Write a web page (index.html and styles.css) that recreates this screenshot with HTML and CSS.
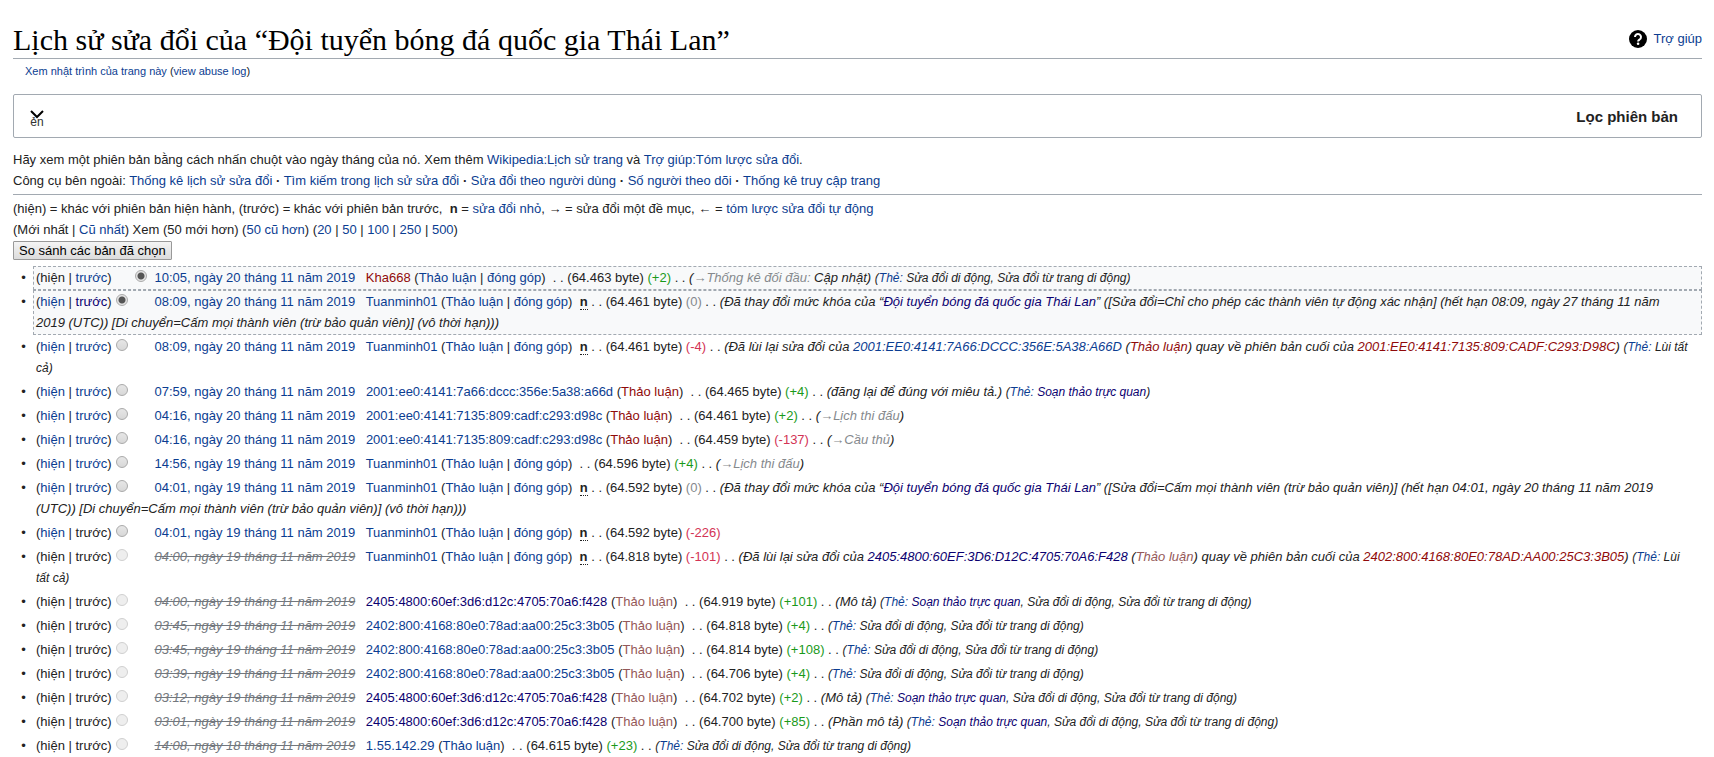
FILE: index.html
```html
<!DOCTYPE html>
<html lang="vi">
<head>
    <meta charset="UTF-8">
    <meta name="viewport" content="width=device-width, initial-scale=1.0">
    <title>Lịch sử sửa đổi của “Đội tuyển bóng đá quốc gia Thái Lan”</title>
    <link rel="stylesheet" href="styles.css">
</head>
<body>
    <header class="heading">
        <h1>Lịch sử sửa đổi của “Đội tuyển bóng đá quốc gia Thái Lan”</h1>
        <a class="help" href="#">
            <svg width="20" height="20" viewBox="0 0 20 20" aria-hidden="true"><circle cx="10" cy="10" r="9" fill="#000"/><path d="M7 8a3 3 0 1 1 4.6 2.5c-1 .7-1.5 1-1.5 2" fill="none" stroke="#fff" stroke-width="2"/><circle cx="10.100" cy="14.700" r="1.300" fill="#fff"/></svg>
            Trợ giúp
        </a>
    </header>
    <div class="subtitle"><a href="#">Xem nhật trình của trang này</a> (<a href="#">view abuse log</a>)</div>

    <!-- Bộ lọc -->
    <div class="filter">
        <button class="toggle" type="button" aria-label="Mở rộng">
            <svg width="14" height="9" viewBox="0 0 14 9" aria-hidden="true"><path d="M1 1l6 6 6-6" fill="none" stroke="#000" stroke-width="2"/></svg>
            <span>ẻn</span>
        </button>
        <strong>Lọc phiên bản</strong>
    </div>

    <div class="intro">
        <p>Hãy xem một phiên bản bằng cách nhấn chuột vào ngày tháng của nó. Xem thêm <a href="#">Wikipedia:Lịch sử trang</a> và <a href="#">Trợ giúp:Tóm lược sửa đổi</a>.</p>
        <p>Công cụ bên ngoài: <a href="#">Thống kê lịch sử sửa đổi</a> <b>·</b> <a href="#">Tìm kiếm trong lịch sử sửa đổi</a> <b>·</b> <a href="#">Sửa đổi theo người dùng</a> <b>·</b> <a href="#">Số người theo dõi</a> <b>·</b> <a href="#">Thống kê truy cập trang</a></p>
    </div>
    <div class="legend">
        <p>(hiện) = khác với phiên bản hiện hành, (trước) = khác với phiên bản trước, &nbsp;<b>n</b> = <a href="#">sửa đổi nhỏ</a>, → = sửa đổi một đề mục, ← = <a href="#">tóm lược sửa đổi tự động</a></p>
        <p>(Mới nhất | <a href="#">Cũ nhất</a>) Xem (50 mới hơn) (<a href="#">50 cũ hơn</a>) (<a href="#">20</a> | <a href="#">50</a> | <a href="#">100</a> | <a href="#">250</a> | <a href="#">500</a>)</p>
    </div>

    <!-- Danh sách phiên bản -->
    <form>
        <button class="compare" type="button">So sánh các bản đã chọn</button>
        <ul class="history">
            <li class="selected">(hiện | <a href="#">trước</a>)<span class="pick second"><input type="radio" name="diff" aria-label="10:05, ngày 20 tháng 11 năm 2019" checked></span><a class="date" href="#">10:05, ngày 20 tháng 11 năm 2019</a> <a class="new" href="#">Kha668</a> (<a href="#">Thảo luận</a> | <a href="#">đóng góp</a>)&nbsp; . . (64.463 byte) <span class="plus">(+2)</span> . . <i>(<span class="auto">→Thống kê đối đầu:</span> Cập nhật)</i> <i class="tags">(<a href="#">Thẻ:</a> Sửa đổi di động, Sửa đổi từ trang di động)</i></li>
            <li class="selected">(<a href="#">hiện</a> | <a class="visited" href="#">trước</a>)<span class="pick"><input type="radio" name="oldid" aria-label="08:09, ngày 20 tháng 11 năm 2019" checked></span><a class="date" href="#">08:09, ngày 20 tháng 11 năm 2019</a> <a href="#">Tuanminh01</a> (<a href="#">Thảo luận</a> | <a href="#">đóng góp</a>)&nbsp; <abbr>n</abbr> . . (64.461 byte) <span class="zero">(0)</span> . . <i>(Đã thay đổi mức khóa của “<a class="visited" href="#">Đội tuyển bóng đá quốc gia Thái Lan</a>” ([Sửa đổi=Chỉ cho phép các thành viên tự động xác nhận] (hết hạn 08:09, ngày 27 tháng 11 năm 2019 (UTC)) [Di chuyển=Cấm mọi thành viên (trừ bảo quản viên)] (vô thời hạn)))</i></li>
            <li>(<a href="#">hiện</a> | <a href="#">trước</a>)<span class="pick"><input type="radio" name="oldid" aria-label="08:09, ngày 20 tháng 11 năm 2019"></span><a class="date" href="#">08:09, ngày 20 tháng 11 năm 2019</a> <a href="#">Tuanminh01</a> (<a href="#">Thảo luận</a> | <a href="#">đóng góp</a>)&nbsp; <abbr>n</abbr> . . (64.461 byte) <span class="minus">(-4)</span> . . <i>(Đã lùi lại sửa đổi của <a href="#">2001:EE0:4141:7A66:DCCC:356E:5A38:A66D</a> (<a class="new" href="#">Thảo luận</a>) quay về phiên bản cuối của <a class="new" href="#">2001:EE0:4141:7135:809:CADF:C293:D98C</a>)</i> <i class="tags">(<a href="#">Thẻ:</a> Lùi tất cả)</i></li>
            <li>(<a href="#">hiện</a> | <a href="#">trước</a>)<span class="pick"><input type="radio" name="oldid" aria-label="07:59, ngày 20 tháng 11 năm 2019"></span><a class="date" href="#">07:59, ngày 20 tháng 11 năm 2019</a> <a href="#">2001:ee0:4141:7a66:dccc:356e:5a38:a66d</a> (<a class="new" href="#">Thảo luận</a>)&nbsp; . . (64.465 byte) <span class="plus">(+4)</span> . . <i>(đăng lại để đúng với miêu tả.)</i> <i class="tags">(<a href="#">Thẻ:</a> <a class="visited" href="#">Soạn thảo trực quan</a>)</i></li>
            <li>(<a href="#">hiện</a> | <a href="#">trước</a>)<span class="pick"><input type="radio" name="oldid" aria-label="04:16, ngày 20 tháng 11 năm 2019"></span><a class="date" href="#">04:16, ngày 20 tháng 11 năm 2019</a> <a href="#">2001:ee0:4141:7135:809:cadf:c293:d98c</a> (<a class="new" href="#">Thảo luận</a>)&nbsp; . . (64.461 byte) <span class="plus">(+2)</span> . . <i>(<span class="auto">→Lịch thi đấu</span>)</i></li>
            <li>(<a href="#">hiện</a> | <a href="#">trước</a>)<span class="pick"><input type="radio" name="oldid" aria-label="04:16, ngày 20 tháng 11 năm 2019"></span><a class="date" href="#">04:16, ngày 20 tháng 11 năm 2019</a> <a href="#">2001:ee0:4141:7135:809:cadf:c293:d98c</a> (<a class="new" href="#">Thảo luận</a>)&nbsp; . . (64.459 byte) <span class="minus">(-137)</span> . . <i>(<span class="auto">→Cầu thủ</span>)</i></li>
            <li>(<a href="#">hiện</a> | <a href="#">trước</a>)<span class="pick"><input type="radio" name="oldid" aria-label="14:56, ngày 19 tháng 11 năm 2019"></span><a class="date" href="#">14:56, ngày 19 tháng 11 năm 2019</a> <a href="#">Tuanminh01</a> (<a href="#">Thảo luận</a> | <a href="#">đóng góp</a>)&nbsp; . . (64.596 byte) <span class="plus">(+4)</span> . . <i>(<span class="auto">→Lịch thi đấu</span>)</i></li>
            <li>(<a href="#">hiện</a> | <a href="#">trước</a>)<span class="pick"><input type="radio" name="oldid" aria-label="04:01, ngày 19 tháng 11 năm 2019"></span><a class="date" href="#">04:01, ngày 19 tháng 11 năm 2019</a> <a href="#">Tuanminh01</a> (<a href="#">Thảo luận</a> | <a href="#">đóng góp</a>)&nbsp; <abbr>n</abbr> . . (64.592 byte) <span class="zero">(0)</span> . . <i>(Đã thay đổi mức khóa của “<a class="visited" href="#">Đội tuyển bóng đá quốc gia Thái Lan</a>” ([Sửa đổi=Cấm mọi thành viên (trừ bảo quản viên)] (hết hạn 04:01, ngày 20 tháng 11 năm 2019 (UTC)) [Di chuyển=Cấm mọi thành viên (trừ bảo quản viên)] (vô thời hạn)))</i></li>
            <li>(<a href="#">hiện</a> | trước)<span class="pick"><input type="radio" name="oldid" aria-label="04:01, ngày 19 tháng 11 năm 2019"></span><a class="date" href="#">04:01, ngày 19 tháng 11 năm 2019</a> <a href="#">Tuanminh01</a> (<a href="#">Thảo luận</a> | <a href="#">đóng góp</a>)&nbsp; <abbr>n</abbr> . . (64.592 byte) <span class="minus">(-226)</span></li>
            <li>(hiện | trước)<span class="pick"><input type="radio" name="oldid" aria-label="04:00, ngày 19 tháng 11 năm 2019" disabled></span><span class="date deleted">04:00, ngày 19 tháng 11 năm 2019</span> <a href="#">Tuanminh01</a> (<a href="#">Thảo luận</a> | <a href="#">đóng góp</a>)&nbsp; <abbr>n</abbr> . . (64.818 byte) <span class="minus">(-101)</span> . . <i>(Đã lùi lại sửa đổi của <a class="visited" href="#">2405:4800:60EF:3D6:D12C:4705:70A6:F428</a> (<a class="new-visited" href="#">Thảo luận</a>) quay về phiên bản cuối của <a class="new" href="#">2402:800:4168:80E0:78AD:AA00:25C3:3B05</a>)</i> <i class="tags">(<a href="#">Thẻ:</a> Lùi tất cả)</i></li>
            <li>(hiện | trước)<span class="pick"><input type="radio" name="oldid" aria-label="04:00, ngày 19 tháng 11 năm 2019" disabled></span><span class="date deleted">04:00, ngày 19 tháng 11 năm 2019</span> <a class="visited" href="#">2405:4800:60ef:3d6:d12c:4705:70a6:f428</a> (<a class="new-visited" href="#">Thảo luận</a>)&nbsp; . . (64.919 byte) <span class="plus">(+101)</span> . . <i>(Mô tả)</i> <i class="tags">(<a href="#">Thẻ:</a> <a class="visited" href="#">Soạn thảo trực quan</a>, Sửa đổi di động, Sửa đổi từ trang di động)</i></li>
            <li>(hiện | trước)<span class="pick"><input type="radio" name="oldid" aria-label="03:45, ngày 19 tháng 11 năm 2019" disabled></span><span class="date deleted">03:45, ngày 19 tháng 11 năm 2019</span> <a href="#">2402:800:4168:80e0:78ad:aa00:25c3:3b05</a> (<a class="new-visited" href="#">Thảo luận</a>)&nbsp; . . (64.818 byte) <span class="plus">(+4)</span> . . <i class="tags">(<a href="#">Thẻ:</a> Sửa đổi di động, Sửa đổi từ trang di động)</i></li>
            <li>(hiện | trước)<span class="pick"><input type="radio" name="oldid" aria-label="03:45, ngày 19 tháng 11 năm 2019" disabled></span><span class="date deleted">03:45, ngày 19 tháng 11 năm 2019</span> <a href="#">2402:800:4168:80e0:78ad:aa00:25c3:3b05</a> (<a class="new-visited" href="#">Thảo luận</a>)&nbsp; . . (64.814 byte) <span class="plus">(+108)</span> . . <i class="tags">(<a href="#">Thẻ:</a> Sửa đổi di động, Sửa đổi từ trang di động)</i></li>
            <li>(hiện | trước)<span class="pick"><input type="radio" name="oldid" aria-label="03:39, ngày 19 tháng 11 năm 2019" disabled></span><span class="date deleted">03:39, ngày 19 tháng 11 năm 2019</span> <a href="#">2402:800:4168:80e0:78ad:aa00:25c3:3b05</a> (<a class="new-visited" href="#">Thảo luận</a>)&nbsp; . . (64.706 byte) <span class="plus">(+4)</span> . . <i class="tags">(<a href="#">Thẻ:</a> Sửa đổi di động, Sửa đổi từ trang di động)</i></li>
            <li>(hiện | trước)<span class="pick"><input type="radio" name="oldid" aria-label="03:12, ngày 19 tháng 11 năm 2019" disabled></span><span class="date deleted">03:12, ngày 19 tháng 11 năm 2019</span> <a class="visited" href="#">2405:4800:60ef:3d6:d12c:4705:70a6:f428</a> (<a class="new-visited" href="#">Thảo luận</a>)&nbsp; . . (64.702 byte) <span class="plus">(+2)</span> . . <i>(Mô tả)</i> <i class="tags">(<a href="#">Thẻ:</a> <a class="visited" href="#">Soạn thảo trực quan</a>, Sửa đổi di động, Sửa đổi từ trang di động)</i></li>
            <li>(hiện | trước)<span class="pick"><input type="radio" name="oldid" aria-label="03:01, ngày 19 tháng 11 năm 2019" disabled></span><span class="date deleted">03:01, ngày 19 tháng 11 năm 2019</span> <a class="visited" href="#">2405:4800:60ef:3d6:d12c:4705:70a6:f428</a> (<a class="new-visited" href="#">Thảo luận</a>)&nbsp; . . (64.700 byte) <span class="plus">(+85)</span> . . <i>(Phần mô tả)</i> <i class="tags">(<a href="#">Thẻ:</a> <a class="visited" href="#">Soạn thảo trực quan</a>, Sửa đổi di động, Sửa đổi từ trang di động)</i></li>
            <li>(hiện | trước)<span class="pick"><input type="radio" name="oldid" aria-label="14:08, ngày 18 tháng 11 năm 2019" disabled></span><span class="date deleted">14:08, ngày 18 tháng 11 năm 2019</span> <a href="#">1.55.142.29</a> (<a href="#">Thảo luận</a>)&nbsp; . . (64.615 byte) <span class="plus">(+23)</span> . . <i class="tags">(<a href="#">Thẻ:</a> Sửa đổi di động, Sửa đổi từ trang di động)</i></li>
        </ul>
    </form>
</body>
</html>
```
FILE: styles.css
```css
* {
    box-sizing: border-box;
}

body {
    margin: 0;
    padding: 22px 12px 0 13px;
    background-color: #fff;
    color: #222;
    font-family: "Liberation Sans", Arial, sans-serif;
    font-size: 13px;
    line-height: 21px;
}

a {
    color: #0b3d91;
    text-decoration: none;
}

p {
    margin: 0;
}

.heading {
    display: flex;
    justify-content: space-between;
    align-items: flex-start;
    border-bottom: 1px solid #a2a9b1;
}

h1 {
    margin: 0;
    color: #000;
    font-family: "Palatino Linotype", Palatino, "Liberation Serif", serif;
    font-size: 30px;
    font-weight: normal;
    line-height: 36px;
}

.help {
    display: flex;
    align-items: center;
    gap: 5px;
    padding-top: 6px;
}

.subtitle {
    padding: 2px 12px;
    font-size: 11px;
}

.filter {
    display: flex;
    justify-content: space-between;
    align-items: center;
    height: 44px;
    margin: 10px 0 11px;
    padding: 0 23px 0 16px;
    border: 1px solid #a2a9b1;
    border-radius: 2px;
    font-size: 15px;
}

.toggle {
    display: grid;
    justify-items: center;
    padding: 2px 0 0;
    border: 0;
    background: none;
    color: #333;
    font: 12px/6px "Liberation Sans", Arial, sans-serif;
}

.intro {
    padding-bottom: 3px;
    border-bottom: 1px solid #a2a9b1;
}

.legend {
    padding-top: 3px;
}

.compare {
    display: block;
    height: 19px;
    margin-top: 1px;
    padding: 0 5px;
    border: 1px solid #999;
    border-radius: 1px;
    background: linear-gradient(#f4f4f4, #dcdcdc);
    color: #000;
    font: 13px/17px "Liberation Sans", Arial, sans-serif;
}

.history {
    margin: 6px 0 0;
    padding: 0 0 0 20px;
    list-style-type: "•\00a0\00a0";
}

.history li {
    margin-bottom: 1px;
    padding: 0 11px 0 2px;
    border: 1px solid transparent;
}

.history .selected {
    margin: 0;
    padding-bottom: 1px;
    border: 1px dashed #a2a9b1;
    background-color: #f8f9fa;
}

.pick {
    display: inline-flex;
    width: 43px;
    padding-left: 4px;
    line-height: 12px;
}

.second {
    padding-left: 23px;
}

.pick input {
    appearance: none;
    width: 12px;
    height: 12px;
    margin: 0;
    border: 1px solid #aaa;
    border-radius: 50%;
    background: linear-gradient(#e6e6e6, #d8d8d8);
}

.pick input:checked {
    background: radial-gradient(circle, #555 3px, #e4e4e4 4px);
}

.pick input:disabled {
    border-color: #d0d0d0;
    background: #eee;
}

.date {
    margin-right: 7px;
}

.deleted {
    color: #72777d;
    font-style: italic;
    text-decoration: line-through;
}

abbr {
    border-bottom: 1px dotted #222;
    font-weight: bold;
}

.tags {
    font-size: 12px;
    line-height: 12px;
}

.visited {
    color: #0b0070;
}

.new {
    color: #900a0a;
}

.new-visited {
    color: #955858;
}

.plus {
    color: #1a9a1a;
}

.minus {
    color: #d33355;
}

.zero,
.auto {
    color: #85898d;
}
```
